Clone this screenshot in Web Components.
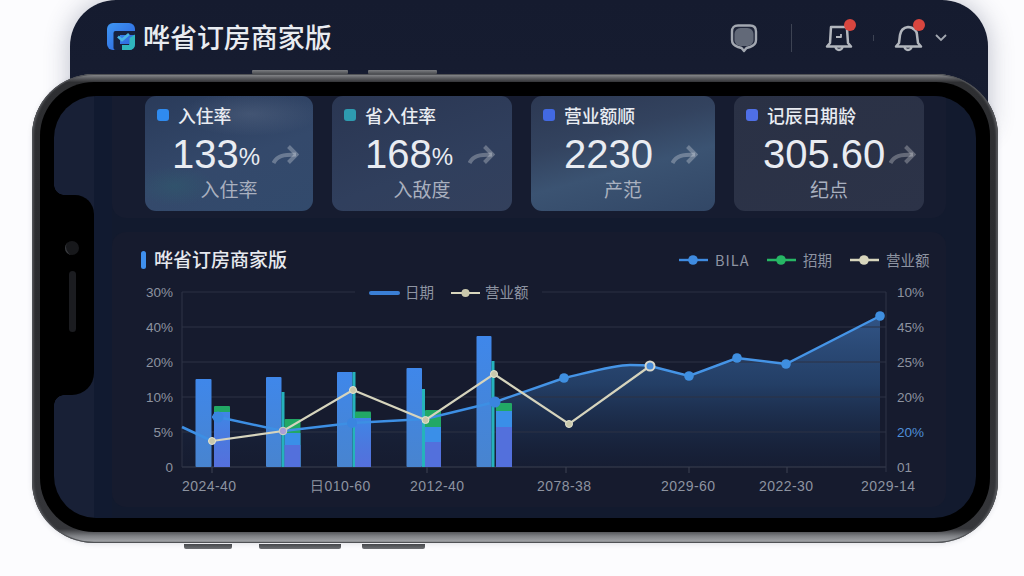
<!DOCTYPE html>
<html lang="zh"><head><meta charset="utf-8"><title>哗省订房商家版</title>
<style>
html,body{margin:0;padding:0;width:1024px;height:576px;overflow:hidden;background:#fcfcfe}
body{font-family:"Noto Sans CJK SC","Liberation Sans",sans-serif}
</style></head><body>
<app-page>
  <app-header slot="header" title-text="哗省订房商家版"></app-header>
  <phone-frame>
    <stat-panel>
      <stat-card mark="#2f8bef" label="入住率" value="133" unit="%" sub="入住率" inset="27" gap="12" tone="a"></stat-card>
      <stat-card mark="#2e9bb0" label="省入住率" value="168" unit="%" sub="入敌度" inset="33" gap="15" tone="b"></stat-card>
      <stat-card mark="#4269e2" label="营业额顺" value="2230" sub="产范" inset="33" gap="18" tone="c"></stat-card>
      <stat-card mark="#4f6fe6" label="记辰日期龄" value="305.60" sub="纪点" inset="29" gap="4" tone="d"></stat-card>
    </stat-panel>
    <chart-panel heading="哗省订房商家版">
      <chart-legend color="#3f8be0" dot label="BILA" spacing="1" style="width:88px"></chart-legend>
      <chart-legend color="#27b765" dot label="招期" style="width:83px"></chart-legend>
      <chart-legend color="#d8d6bd" dot label="营业额" style="width:82px"></chart-legend>
    </chart-panel>
  </phone-frame>
</app-page>
<script>
function def(name, css, html, setup){
  customElements.define(name, class extends HTMLElement{
    connectedCallback(){
      if(this.shadowRoot) return;
      const r=this.attachShadow({mode:"open"});
      const get=k=>this.getAttribute(k);
      r.innerHTML=`<style>${css}</style>`+(typeof html==="function"?html(get,this):html);
      if(setup) setup(r,get,this);
    }
  });
}
const CJK='"Noto Sans CJK SC","Liberation Sans",sans-serif';

def("app-page",`:host{display:block;width:1024px;height:576px;position:relative}
::slotted(app-header){margin:0 36px 0 70px}`,`<slot name="header"></slot><slot></slot>`);

def("app-header",`:host{display:flex;align-items:flex-start;height:130px;box-sizing:border-box;padding:23px 41px 0 37px;
  background:linear-gradient(180deg,#151b2f,#171d31);border-radius:46px 46px 0 0;box-shadow:0 0 26px rgba(50,60,90,.32);color:#e9ecf1}
.logo{width:28px;height:28px;flex:none;margin-right:8px}
h1{margin:0;font:500 27px/28px ${CJK};letter-spacing:-.05px;white-space:nowrap;flex:1}
.ic{display:flex;align-items:center}
svg{display:block;overflow:visible}
.sep{width:1px;height:28px;background:#3d4353;margin:0 33px}
.tick{width:1px;height:6px;background:#3d4353;margin:0 20px}
.chev{margin-left:13px}`,
(g)=>`<svg class="logo" viewBox="0 0 28 28"><defs><linearGradient id="lg" x1="0" y1="0" x2="1" y2="1"><stop offset="0" stop-color="#3f97f3"/><stop offset="1" stop-color="#2b5fdc"/></linearGradient></defs>
<rect width="28" height="27" rx="6" fill="url(#lg)"/><path d="M6.500 10q0-2 2-2H28v4H13v9h9v6H8.500q-2 0-2-2z" fill="#17223e"/>
<path d="M28 11.500V21.500a5.500 5.500 0 0 1-5.500 5.500H15l0-5h7.500v-7z" fill="#2fb6bd"/><path d="M11 13.500l4 3.500 7-6" fill="none" stroke="#49b4e2" stroke-width="2.800"/></svg>
<h1>${g("title-text")}</h1>
<div class="ic">
<svg width="28" height="30" viewBox="0 0 28 30"><path d="M8 2.500h12q6 0 6 6v8.500q0 5-6 7l-3.500 1-2.500 3-2.500-3-3.500-1q-6-2-6-7V8.500q0-6 6-6z" fill="#20263a" stroke="#a3a8b1" stroke-width="2.400" stroke-linejoin="round"/><rect x="4.500" y="5" width="19" height="18" rx="6" fill="#626978"/></svg>
<span class="sep"></span>
<svg width="28" height="30" viewBox="0 0 28 30" fill="none" stroke="#b2b6bd" stroke-width="2.500" stroke-linejoin="round"><path d="M6 4h15l1 2 1 14 3 3.500H2L5 20z"/><path d="M10.500 23.500a3.500 3.500 0 0 0 7 0"/><path d="M11 14h5v-3" stroke-width="1.800"/></svg>
<span class="tick"></span>
<svg width="28" height="30" viewBox="0 0 28 30" fill="none" stroke="#b2b6bd" stroke-width="2.500" stroke-linejoin="round"><path d="M5 20l1-8q1-7 8-8 4 0 7 3 2 2 2 5l1 8 3 3.500H2z"/><path d="M10.500 23.500a3.500 3.500 0 0 0 7 0"/></svg>
<svg class="chev" width="12" height="8" viewBox="0 0 12 8" fill="none" stroke="#a3a8b1" stroke-width="1.800"><path d="M1 1l5 5 5-5"/></svg>
</div>`,
(r)=>{
  const ics=r.querySelectorAll(".ic>svg");
  [ics[1],ics[2]].forEach(s=>{const c=document.createElementNS("http://www.w3.org/2000/svg","circle");
    c.setAttribute("cx","25");c.setAttribute("cy","2");c.setAttribute("r","6");c.setAttribute("fill","#d8463f");c.setAttribute("stroke","none");s.appendChild(c);});
});

def("phone-frame",`:host{display:block;position:relative;z-index:1;box-sizing:border-box;width:966px;height:469px;margin:-56px 0 0 32px;padding:8px 8px 11px;
  border-radius:62px;background:linear-gradient(180deg,#8f9194 0,#55565a 1%,#2e2f32 1.800%,#2a2b2e 50%,#35363a 97%,#7e8084 98.500%,#9c9ea2 99.500%,#77797c 100%);
  box-shadow:inset 0 0 0 1px #505256,inset 3px 0 2px -1px #4c4d51,inset -3px 0 2px -1px #55565a,0 1px 5px rgba(60,70,90,.15)}
.bezel{height:100%;box-sizing:border-box;padding:14px;background:#000;border-radius:54px}
.screen{position:relative;height:100%;box-sizing:border-box;padding:0 30px 11px 58px;border-radius:42px;overflow:hidden;
  background:linear-gradient(90deg,#182036 0,#182036 40px,#111a30 40px,#111a30 58px,#121a2e 58px);display:flex;flex-direction:column;gap:14px}
.notch{position:absolute;left:0;top:99px;width:40px;height:200px;background:#000;border-radius:0 19px 22px 0}
.notch::before,.notch::after{content:"";position:absolute;left:0;width:10px;height:10px}
.notch::before{top:-10px;background:radial-gradient(circle at 100% 0,transparent 9.500px,#000 10px)}
.notch::after{bottom:-10px;background:radial-gradient(circle at 100% 100%,transparent 9.500px,#000 10px)}
.cam{position:absolute;left:11px;top:46px;width:14px;height:14px;border-radius:50%;background:#17181b;box-shadow:inset 3px -1px 0 -2px #3a3c40}
.spk{position:absolute;left:15px;top:76px;width:7px;height:61px;border-radius:4px;background:#1b1c20}
.btn{position:absolute;background:linear-gradient(#7c7e82,#4a4c50);border-radius:1px}
.top{top:-4px;height:4px}.bot{top:470px;height:5px;border-radius:0 0 2px 2px;background:linear-gradient(#45474b,#6f7175)}`,
`<span class="btn top" style="left:220px;width:96px"></span><span class="btn top" style="left:336px;width:69px"></span>
<span class="btn bot" style="left:152px;width:48px"></span><span class="btn bot" style="left:227px;width:82px"></span><span class="btn bot" style="left:330px;width:63px"></span>
<div class="bezel"><div class="screen"><slot></slot><div class="notch"><span class="cam"></span><span class="spk"></span></div></div></div>`);

def("stat-panel",`:host{display:grid;grid-template-columns:168px 180px 184px 190px;column-gap:19px;height:122px;box-sizing:border-box;
  padding:0 22px 7px 33px;background:#161c30;border-radius:0 0 14px 14px;flex:none}`,`<slot></slot>`);

const tones={
 a:"radial-gradient(70px 22px at 105px 18px,rgba(110,125,150,.3),transparent),radial-gradient(40px 20px at 30px 90px,rgba(40,110,110,.25),transparent),linear-gradient(160deg,#2a3b5a,#34496b 55%,#324a6c)",
 b:"linear-gradient(160deg,#2a3652 0,#303f5d 60%,#33405c)",
 c:"linear-gradient(165deg,#2c3852 0,#33435f 35%,#3b5372 60%,#324766 100%)",
 d:"linear-gradient(160deg,#2a3145,#2c3348)"};
def("stat-card",`:host{display:flex;flex-direction:column;height:115px;box-sizing:border-box;border-radius:11px;color:#e9ecf2;padding:10px 0 0 12px;overflow:hidden}
.head{display:flex;align-items:center;height:18px;gap:9.500px;font:500 17.800px/18px ${CJK};white-space:nowrap}
.head i{width:11.500px;height:12px;border-radius:3px;flex:none}
.row{display:flex;align-items:center;height:42px;margin-top:9px}
.num{font:400 40px/42px "Liberation Sans",sans-serif;white-space:nowrap}
.unit{font:400 24px/42px "Liberation Sans",sans-serif;margin:6px 0 0 0}
.arr{flex:none;display:block}
.sub{margin:3px 0 0 -12px;text-align:center;font:400 19px/22px ${CJK};color:#a9b0bf;white-space:nowrap}`,
(g,h)=>{h.style.background=tones[g("tone")];
 return `<div class="head"><i style="background:${g("mark")}"></i><span>${g("label")}</span></div>
 <div class="row" style="padding-left:${+g("inset")-12}px"><span class="num">${g("value")}</span>${g("unit")?`<span class="unit">${g("unit")}</span>`:""}
 <svg class="arr" style="margin-left:${g("gap")}px" width="27" height="21" viewBox="0 0 27 21" fill="none" stroke="#fff" stroke-opacity=".27" stroke-width="4"><path d="M1.500 19C5 12 11 10.500 24 10.500"/><path d="M16.500 2.500l8 8-8 8"/></svg></div>
 <div class="sub">${g("sub")}</div>`});

def("chart-legend",`:host{display:flex;align-items:center;font:400 14.500px/1 ${CJK};color:#8e94a2;white-space:nowrap;box-sizing:border-box}
svg{flex:none;margin-right:6px;display:block}`,
(g)=>`<svg width="31" height="10" viewBox="0 0 31 10"><path d="M1 5h29" stroke="${g("color")}" stroke-width="2.400"/>${g("dot")!==null?`<circle cx="15" cy="5" r="4.800" fill="${g("color")}"/>`:""}</svg><span style="letter-spacing:${g("spacing")||0}px">${g("label")}</span>`);

function chartSVG(){
  const grid=[327,362,397,432,467].map(y=>`<path d="M182 ${y}H886" stroke="${y==467?'#3a4051':'#2c3345'}"/>`).join("")+
    `<path d="M182 292H355M542 292H886" stroke="#2a3143"/><path d="M182 292V467M886 292V472" stroke="#2e3547"/>`;
  const ticks=[212,427,566,689,787].map(x=>`<path d="M${x} 467v6" stroke="#3c4253"/>`).join("");
  const lab=(x,y,t,a,c)=>`<text x="${x}" y="${y}" text-anchor="${a}" fill="${c||'#8d93a0'}">${t}</text>`;
  const ly=["30%","40%","20%","10%","5%","0"].map((t,i)=>lab(173,297+i*35,t,"end")).join("");
  const ry=["10%","45%","25%","20%","20%","01"].map((t,i)=>lab(897,297+i*35,t,"start",i==4?"#4f8fd8":null)).join("");
  const xl=[[182,"2024-40"],[310,"日010-60"],[410,"2012-40"],[537,"2078-38"],[661,"2029-60"],[759,"2022-30"],[861,"2029-14"]]
    .map(([x,t])=>lab(x,491,t,"start")).join("");
  const bars=[
    {x:195.500,w:16,t:379,thin:0,sx:214,st:[406,412],grad:1},
    {x:266,w:15.500,t:377,thin:392,sx:284.500,st:[419,433,445]},
    {x:337,w:15.500,t:372,thin:372,sx:355,st:[411.500,418],grad:1},
    {x:406.500,w:15.500,t:368,thin:389,sx:425,st:[410,427,442]},
    {x:476.500,w:15,t:336,thin:361,sx:496,st:[403,411,427]}
  ].map(b=>{
    let s=`<rect x="${b.x}" y="${b.t}" width="${b.w}" height="${467-b.t}" rx="1" fill="url(#tall)"/>`;
    if(b.thin) s+=`<rect x="${b.x+b.w}" y="${b.thin}" width="3" height="${467-b.thin}" fill="#25b3bb"/>`;
    s+=`<rect x="${b.sx}" y="${b.st[0]}" width="16" height="${467-b.st[0]}" rx="1" fill="#22a865"/>`;
    s+=`<rect x="${b.sx}" y="${b.st[1]}" width="16" height="${467-b.st[1]}" fill="${b.grad?'url(#mix)':'#3a8fe8'}"/>`;
    if(!b.grad) s+=`<rect x="${b.sx}" y="${b.st[2]}" width="16" height="${467-b.st[2]}" fill="#5370dc"/>`;
    return s}).join("");
  const tail="L564 378C590 372 615 365 630 365C640 365 645 365 650 366L689 376L737 358L786 364L880 316";
  const bl=[[564,378],[689,376],[737,358],[786,364],[880,316]].map(([x,y])=>`<circle cx="${x}" cy="${y}" r="4.800" fill="#3f8fe0"/>`).join("");
  const bg=[[212,441],[353,390],[425.500,420],[494,374],[569,424]];
  const bgd=bg.map(([x,y])=>`<circle cx="${x}" cy="${y}" r="3.500" fill="#c9c8ac" stroke="#e6e4d0"/>`).join("");
  return `<svg width="834" height="232" viewBox="112 275 834 232"><defs>
  <linearGradient id="tall" x1="0" y1="0" x2="0" y2="1"><stop offset="0" stop-color="#3f87ea"/><stop offset="1" stop-color="#4884cf"/></linearGradient>
  <linearGradient id="mix" x1="0" y1="0" x2="0" y2="1"><stop offset="0" stop-color="#3f86e6"/><stop offset=".55" stop-color="#4c78de"/><stop offset="1" stop-color="#5570dc"/></linearGradient>
  <linearGradient id="area" gradientUnits="userSpaceOnUse" x1="0" y1="316" x2="0" y2="467"><stop offset="0" stop-color="#33578a" stop-opacity=".95"/><stop offset=".45" stop-color="#264570" stop-opacity=".85"/><stop offset="1" stop-color="#16233f" stop-opacity=".3"/></linearGradient></defs>
  <path d="M182 467V427L212 441L218 417L283 431L352 423L425 419L495 402V467Z" fill="url(#area)" opacity=".45"/>
  <path d="M495 467V402${tail}V467Z" fill="url(#area)"/>
  ${grid}${ticks}
  ${bars}
  <path d="M182 427L212 441" stroke="#3d8fe4" stroke-width="2.500" fill="none"/>
  <path d="M212 417L218 417L283 431L352 423L425 419L495 402" stroke="#3d8fe4" stroke-width="2.500" fill="none"/>
  <path d="M495 402${tail}" stroke="#4594e6" stroke-width="2.500" fill="none"/>
  <circle cx="218" cy="417" r="5.500" fill="#3a85e0"/><circle cx="352" cy="423" r="5" fill="#3a85e0"/><circle cx="495" cy="402" r="5.500" fill="#3a85e0"/>${bl}
  <polyline points="212,441 283,431 353,390 425.500,420 494,374 569,424 650,366" fill="none" stroke="#d6d4bd" stroke-width="2.200"/>
  ${bgd}<circle cx="283" cy="431" r="3.800" fill="#a99fd8" stroke="#d6d4bd"/>
  <circle cx="650" cy="366" r="4.500" fill="#4a8cd8" stroke="#d8d8cc" stroke-width="2"/>
  <g font-family="Liberation Sans,sans-serif" font-size="13.500">${ly}${ry}<g font-size="14" letter-spacing=".45">${xl}</g></g>
  <path d="M371 293H398" stroke="#3a7fd6" stroke-width="4" stroke-linecap="round"/>
  <path d="M451 293H480" stroke="#d8d6bd" stroke-width="2"/><circle cx="465.500" cy="293" r="4" fill="#c9c8ac"/>
  <g font-family='"Noto Sans CJK SC",sans-serif' font-size="14.500" fill="#8e94a2"><text x="405" y="298">日期</text><text x="485" y="298">营业额</text></g>
  </svg>`;
}
def("chart-panel",`:host{display:block;height:275px;background:#161b2e;border-radius:14px;flex:none;overflow:hidden}
.head{display:flex;align-items:center;height:43px;box-sizing:border-box;padding:13px 0 0 29px}
.bar{width:5px;height:18px;border-radius:2.500px;background:#3f90ee;margin-right:8px}
h2{margin:-4px 0 0;font:500 19px/1 ${CJK};color:#e6e9ee;flex:1;white-space:nowrap}
.leg{display:flex;margin-right:15px}
svg{display:block}`,
(g)=>`<div class="head"><span class="bar"></span><h2>${g("heading")}</h2><div class="leg"><slot></slot></div></div>${chartSVG()}`);
</script>
</body></html>
